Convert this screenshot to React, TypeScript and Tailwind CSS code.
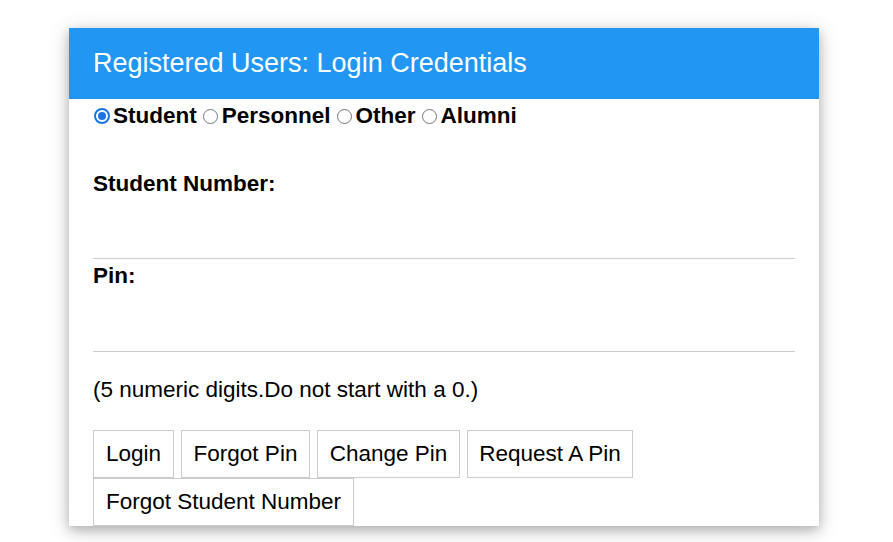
import React from "react";

function Radio({ checked }: { checked?: boolean }) {
  if (checked) {
    return (
      <span className="inline-flex items-center justify-center w-[16px] h-[16px] rounded-full border-[2px] border-[#1a73e8] bg-white shrink-0">
        <span className="block w-[8px] h-[8px] rounded-full bg-[#1a73e8]" />
      </span>
    );
  }
  return <span className="inline-block w-[15px] h-[15px] rounded-full border border-[#767676] bg-white shrink-0" />;
}

export default function App() {
  const font = { fontFamily: '"Liberation Sans", Arial, sans-serif' };
  const buttons: { label: string; w: string }[] = [
    { label: "Login", w: "w-[81px]" },
    { label: "Forgot Pin", w: "w-[129px]" },
    { label: "Change Pin", w: "w-[143px]" },
    { label: "Request A Pin", w: "w-[166px]" },
    { label: "Forgot Student Number", w: "w-[261px]" },
  ];
  return (
    <div className="w-[893px] h-[542px] bg-white overflow-hidden pt-[28px]" style={font}>
      <div className="ml-[69px] w-[750px] bg-white shadow-[0_4px_10px_0_rgba(0,0,0,0.2),0_4px_20px_0_rgba(0,0,0,0.19)]">
        <div className="h-[71px] bg-[#2196F3] flex items-center px-[24px] text-white text-[27px] leading-[31px]">
          Registered Users: Login Credentials
        </div>
        <div className="px-[24px] text-black">
          <div className="h-[33px] pt-[1px] flex items-center text-[22.5px] font-bold leading-[26px]">
            <span className="ml-[1px] mr-[3px] flex"><Radio checked /></span>
            <span>Student</span>
            <span className="ml-[6px] mr-[4px] flex"><Radio /></span>
            <span>Personnel</span>
            <span className="ml-[6px] mr-[4px] flex"><Radio /></span>
            <span>Other</span>
            <span className="ml-[6px] mr-[4px] flex"><Radio /></span>
            <span>Alumni</span>
          </div>
          <div className="mt-[39px] text-[22.5px] font-bold leading-[26px]">Student Number:</div>
          <div className="h-[62px] border-b border-[#cccccc]" />
          <div className="mt-[4px] text-[22.5px] font-bold leading-[26px]">Pin:</div>
          <div className="h-[63px] border-b border-[#cccccc]" />
          <div className="mt-[25px] text-[22.5px] leading-[26px]">(5 numeric digits.Do not start with a 0.)</div>
          <div className="mt-[27px] flex flex-wrap gap-x-[7px] text-[22.5px] leading-[26px]">
            {buttons.map((b) => (
              <div
                key={b.label}
                className={`${b.w} h-[48px] border border-[#cccccc] bg-white flex items-center justify-center whitespace-nowrap`}
              >
                {b.label}
              </div>
            ))}
          </div>
        </div>
      </div>
    </div>
  );
}
